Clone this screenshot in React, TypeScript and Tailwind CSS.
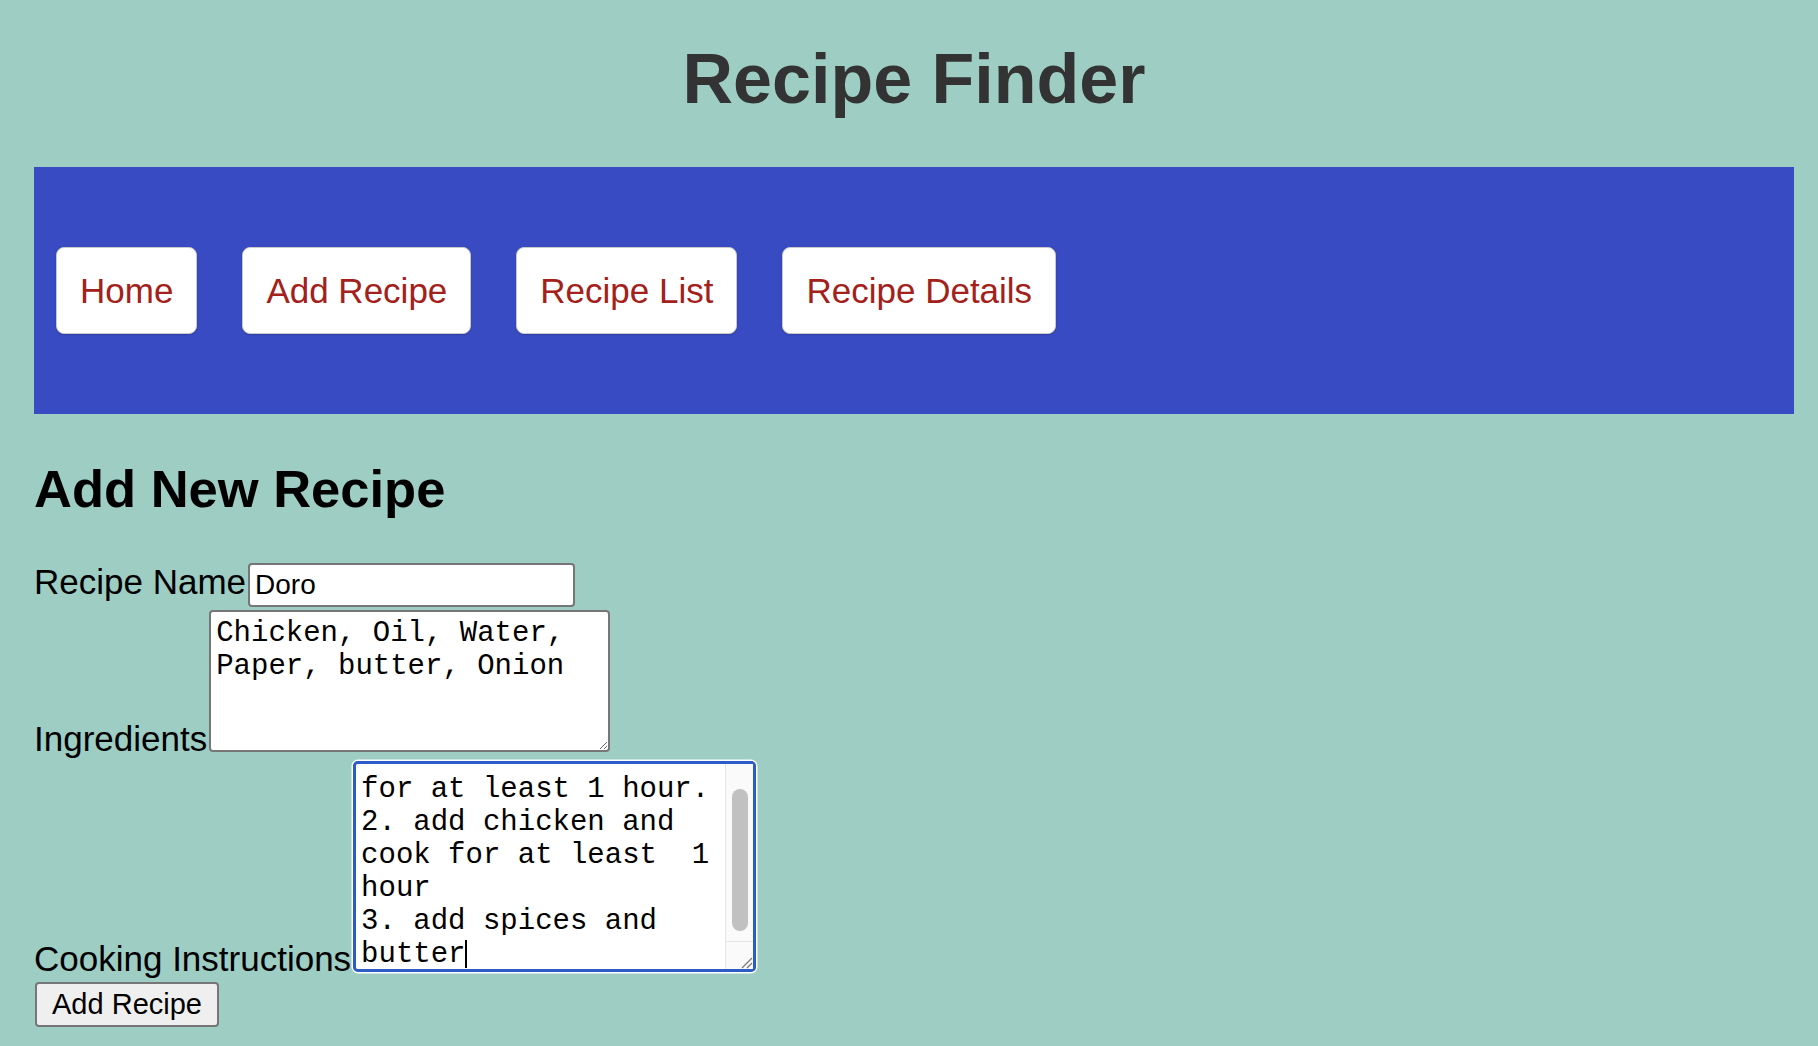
import { useEffect, useRef } from 'react';

const navItems = ['Home', 'Add Recipe', 'Recipe List', 'Recipe Details'];

const steps =
    '1. boil oil, water and onions\nfor at least 1 hour.\n2. add chicken and cook for at least  1 hour\n3. add spices and butter';

export default function App() {
    const stepsRef = useRef<HTMLTextAreaElement>(null);

    useEffect(() => {
        // keep the instructions box scrolled down like while typing
        if (stepsRef.current) stepsRef.current.scrollTop = 62;
    }, []);

    return (
        <div className="min-h-screen bg-[#9dcdc3] pb-[20px] pl-[34px] pr-[24px] font-['Liberation_Sans',Arial,sans-serif] text-black">
            <h1 className="pt-[39px] text-center text-[70px] leading-[80px] font-bold text-[#333333]">Recipe Finder</h1>

            {/* Nav */}
            <nav className="mt-[48px] flex h-[247px] items-center gap-[45px] bg-[#384bc2] pl-[22px]">
                {navItems.map((item) => (
                    <button
                        key={item}
                        className="flex h-[87px] items-center rounded-[8px] border border-[#c9c9c9] bg-white px-[23px] text-[35px] leading-[40px] text-[#a3211a] shadow-[0_1px_2px_rgba(0,0,0,0.15)]"
                    >
                        {item}
                    </button>
                ))}
            </nav>

            <h2 className="mt-[45px] text-[52.5px] leading-[60px] font-bold">Add New Recipe</h2>

            {/* Form */}
            <form className="flex flex-col items-start" onSubmit={(e) => e.preventDefault()}>
                <div className="mt-[43px] flex items-baseline">
                    <label className="text-[35px] leading-[40px]">Recipe Name</label>
                    <input
                        type="text"
                        defaultValue="Doro"
                        className="ml-[2px] h-[44px] w-[327px] rounded-[4px] border-2 border-[#767676] bg-white px-[5px] text-[28px] text-black outline-none"
                    />
                </div>

                <div className="mt-[3px] flex items-end">
                    <label className="text-[35px] leading-[26px]">Ingredients</label>
                    <textarea
                        defaultValue="Chicken, Oil, Water, Paper, butter, Onion"
                        className="ml-[2px] block h-[142px] w-[401px] rounded-[4px] border-2 border-[#767676] bg-white p-[5px] [font-family:'Courier_New',Courier,'Nimbus_Mono_PS','FreeMono','Liberation_Mono',monospace] text-[29px] leading-[33px] text-black outline-none"
                    />
                </div>

                <div className="mt-[9px] flex items-end">
                    <label className="text-[35px] leading-[26px]">Cooking Instructions</label>
                    <div className="relative ml-[2px]">
                        <textarea
                            ref={stepsRef}
                            defaultValue={steps}
                            className="block h-[211px] w-[403px] overflow-y-scroll rounded-[5px] border-[3px] border-[#2c5cc5] bg-white py-[5px] pr-[33px] pl-[5px] [font-family:'Courier_New',Courier,'Nimbus_Mono_PS','FreeMono','Liberation_Mono',monospace] text-[29px] leading-[33px] text-black shadow-[0_0_0_1.5px_#ffffff] outline-none"
                        />
                        {/* scrollbar */}
                        <div className="pointer-events-none absolute top-[3px] right-[3px] bottom-[3px] flex w-[28px] flex-col border-l border-[#e6e6e6] bg-[#fafafa]">
                            <div className="flex-1 pt-[25px] pl-[6px]">
                                <div className="h-[142px] w-[16px] rounded-full bg-[#c1c1c1]" />
                            </div>
                            <div className="relative h-[28px] border-t border-[#e6e6e6]">
                                <svg className="absolute right-0 bottom-0" width="14" height="14" viewBox="0 0 14 14">
                                    <path d="M13 3 L3 13 M13 8 L8 13" stroke="#7a7a7a" strokeWidth="1.3" fill="none" />
                                </svg>
                            </div>
                        </div>
                        {/* caret */}
                        <div className="absolute top-[179px] left-[112px] h-[28px] w-[1.5px] bg-black" />
                    </div>
                </div>

                <button
                    type="submit"
                    className="mt-[10px] ml-px h-[45px] w-[184px] rounded-[4px] border-2 border-[#767676] bg-[#efefef] text-[29px] leading-[33px] text-black"
                >
                    Add Recipe
                </button>
            </form>
        </div>
    );
}
